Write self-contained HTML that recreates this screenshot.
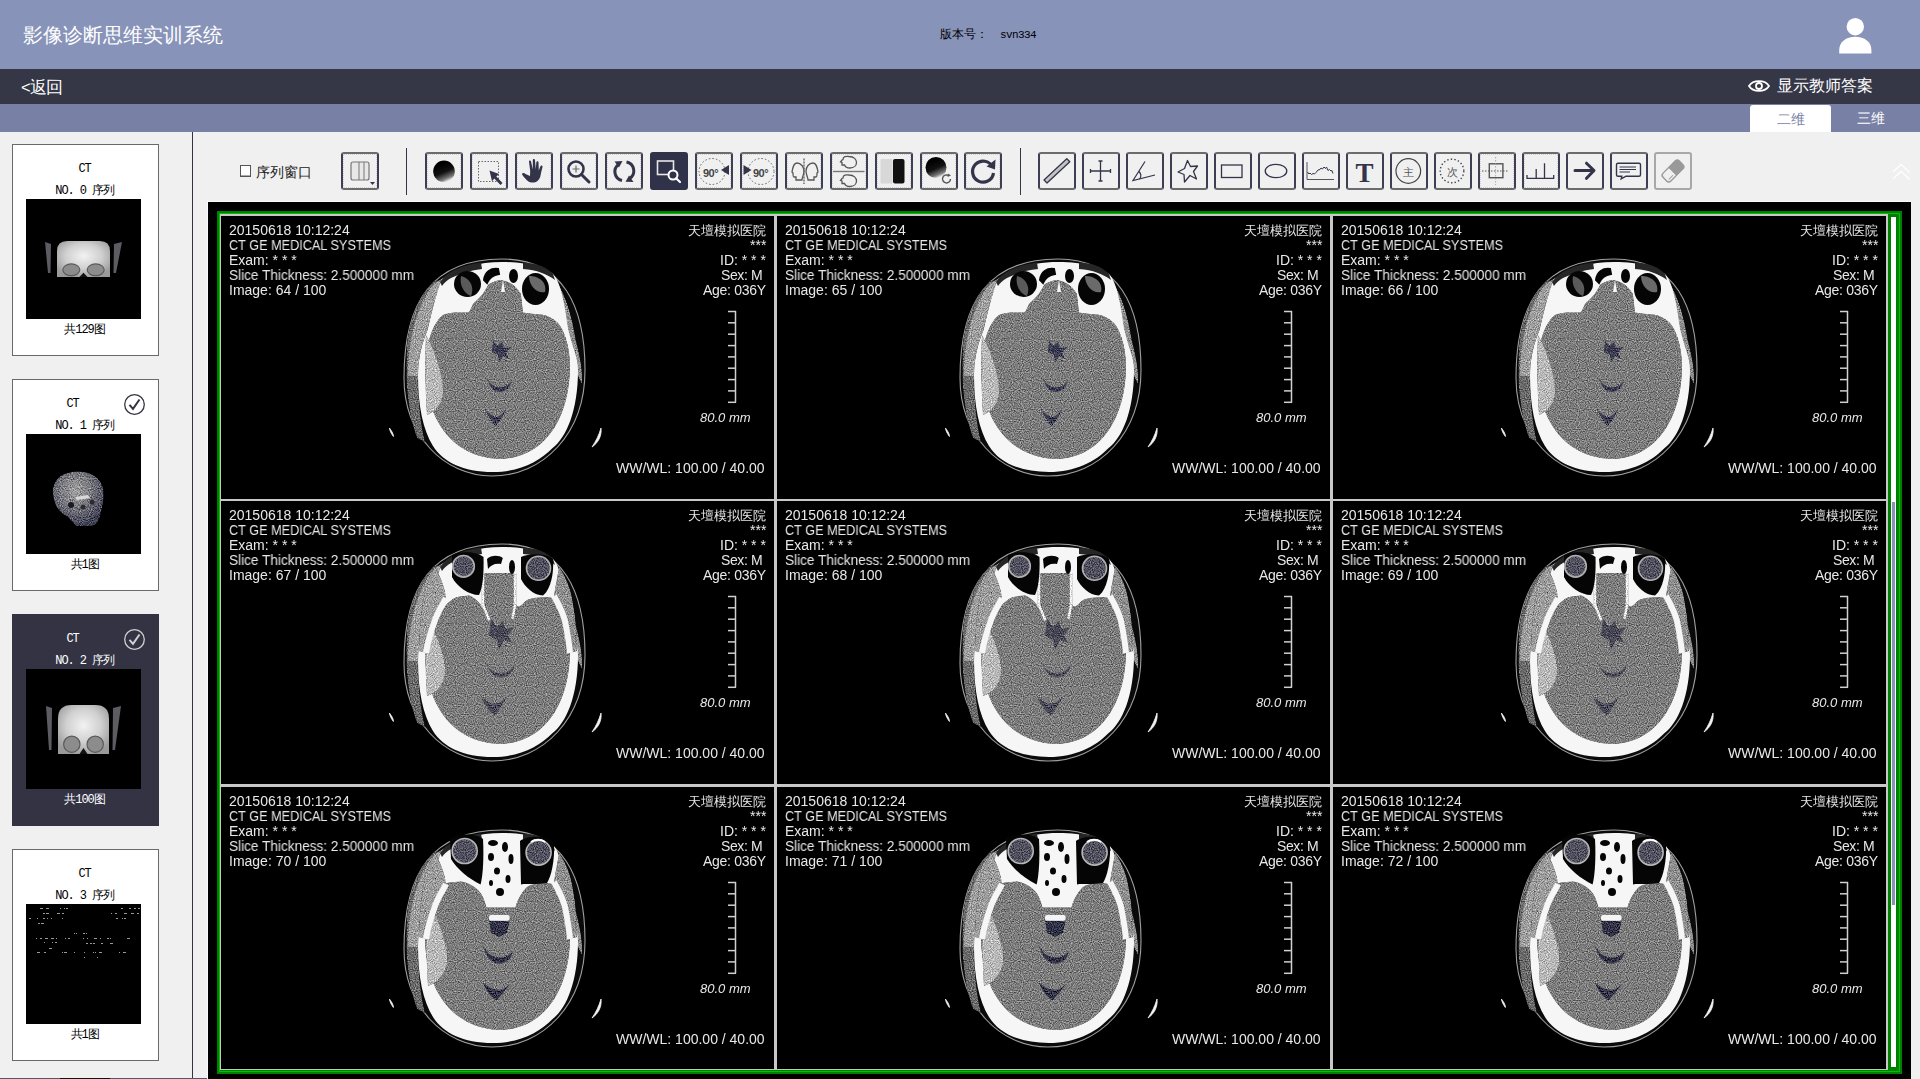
<!DOCTYPE html>
<html><head><meta charset="utf-8"><title>影像诊断思维实训系统</title>
<style>
*{box-sizing:border-box;margin:0;padding:0}
html,body{width:1920px;height:1079px;overflow:hidden;background:#f0f0f0;font-family:"Liberation Sans",sans-serif;position:relative}
.a{position:absolute}
.hdr{left:0;top:0;width:1920px;height:69px;background:#8893b9}
.bar{left:0;top:69px;width:1920px;height:35px;background:#353646}
.band{left:0;top:104px;width:1920px;height:28px;background:#7880a6}
.card{position:absolute;left:12px;width:147px;height:212px;background:#fff;border:1px solid #6a6a6a;}
.card.sel{background:#333344;border-color:#333344}
.card .t{position:absolute;left:-1px;width:100%;text-align:center;font-family:"Liberation Mono",monospace;font-size:12px;line-height:14px;letter-spacing:-1.1px;color:#000;white-space:nowrap}
.card.sel .t{color:#fff}
.thumb{position:absolute;left:13px;top:54px;width:115px;height:120px;background:#000;overflow:hidden}
.btn{position:absolute;top:152px;width:38px;height:38px;border:2px solid;border-color:#6c6c6c #3e3f54 #6c6c6c #3e3f54;border-radius:3px;background:#f0f0f0}
.btn .in{position:absolute;left:0;top:0;right:0;bottom:0;border:1px dotted #d0d0d8}
.btn svg{position:absolute;left:0;top:0}
.pn{position:absolute;background:#000;overflow:hidden}
.pn .tx{position:absolute;color:#e8e8e8;font-size:14px;line-height:15px;white-space:nowrap;will-change:transform}
</style></head><body>

<div class="a hdr"></div>
<div class="a" style="left:23px;top:22px;font-size:20px;line-height:26px;color:#fff;white-space:nowrap">影像诊断思维实训系统</div>
<div class="a" style="left:940px;top:27px;font-size:12px;line-height:14px;color:#000;white-space:nowrap">版本号：</div>
<div class="a" style="left:1000px;top:28px;font-family:'Liberation Mono',monospace;font-size:11px;line-height:14px;letter-spacing:-0.6px;color:#000;white-space:nowrap">svn334</div>
<svg class="a" style="left:1830px;top:10px" width="50" height="50" viewBox="0 0 50 50"><circle cx="25.3" cy="16.7" r="8.7" fill="#fff"/><path d="M9.2 43.6 V40 C9.2 32 16 26.7 25.3 26.7 C34.6 26.7 41.4 32 41.4 40 V43.6 Z" fill="#fff"/></svg>
<div class="a bar"></div>
<div class="a" style="left:21px;top:77px;font-size:16.5px;letter-spacing:-0.7px;line-height:20px;color:#fff;white-space:nowrap">&lt;返回</div>
<svg class="a" style="left:1746px;top:75px" width="26" height="22" viewBox="0 0 26 22"><path d="M3 11 C7 4.5 19 4.5 23 11 C19 17.5 7 17.5 3 11 Z" fill="none" stroke="#fff" stroke-width="1.8"/><circle cx="13" cy="11" r="3" fill="none" stroke="#fff" stroke-width="1.8"/></svg>
<div class="a" style="left:1777px;top:76px;font-size:16px;line-height:20px;color:#fff;white-space:nowrap">显示教师答案</div>
<div class="a band"></div>
<div class="a" style="left:1750px;top:105px;width:81px;height:27px;background:#fff;border-radius:3px 3px 0 0"></div>
<div class="a" style="left:1777px;top:110px;font-size:14px;line-height:18px;color:#7880a6;white-space:nowrap">二维</div>
<div class="a" style="left:1857px;top:109px;font-size:14px;line-height:18px;color:#fff;white-space:nowrap">三维</div>
<div class="a" style="left:192px;top:132px;width:1px;height:947px;background:#333344"></div>
<div class="a" style="left:0;top:1078px;width:208px;height:1px;background:#555566"></div><div class="a" style="left:60px;top:1078px;width:50px;height:1px;background:#111"></div>
<div class="card" style="top:144px">
<div class="t" style="top:17px">CT</div>
<div class="t" style="top:39px">NO. 0 序列</div>
<div class="thumb"><svg width="115" height="120" viewBox="0 0 115 120"><defs><radialGradient id="ga" cx="0.5" cy="0.42" r="0.62"><stop offset="0" stop-color="#f2f2f2"/><stop offset="0.55" stop-color="#d0d0d0"/><stop offset="1" stop-color="#9a9a9a"/></radialGradient></defs><path d="M19.0 43.0 L25.0 45.0 L24.5 74.0 L22.0 74.0 Z" fill="#5c5c62"/><path d="M96.0 43.0 L88.0 45.0 L87.5 74.0 L90.0 74.0 Z" fill="#5c5c62"/><path d="M31.0 78.0 L31.0 52.1 Q31.0 42.0 41.1 42.0 L73.9 42.0 Q84.0 42.0 84.0 52.1 L84.0 78.0 Z" fill="url(#ga)"/><ellipse cx="45.3" cy="70.8" rx="8.5" ry="5.9" fill="#8c8c8c" stroke="#5a5a5a" stroke-width="1.2"/><ellipse cx="69.7" cy="70.8" rx="8.5" ry="5.9" fill="#8c8c8c" stroke="#5a5a5a" stroke-width="1.2"/><path d="M53.5 78.0 L57.5 73.7 L61.5 78.0 Z" fill="#111"/></svg></div>
<div class="t" style="top:178px">共129图</div>
</div>
<div class="card" style="top:379px">
<div class="t" style="top:17px;left:-13px">CT</div>
<svg class="a" style="left:110px;top:13px" width="24" height="24" viewBox="0 0 24 24"><circle cx="11.5" cy="11.5" r="9.8" fill="none" stroke="#333344" stroke-width="1.3"/><path d="M6.5 11.8 L10 15.8 L16.5 6.5" fill="none" stroke="#333344" stroke-width="2"/></svg>
<div class="t" style="top:39px">NO. 1 序列</div>
<div class="thumb"><svg width="115" height="120" viewBox="0 0 115 120">
<defs><radialGradient id="glat" cx="0.45" cy="0.35" r="0.65"><stop offset="0" stop-color="#a0a0a0"/><stop offset="0.45" stop-color="#7a7a80"/><stop offset="1" stop-color="#3e4052"/></radialGradient></defs>
<g filter="url(#grain)"><path d="M28 66 C24 52 30 40 46 38 C62 36 74 42 77 54 C79 64 76 74 74 82 C72 88 70 92 64 92 L50 92 C46 88 44 84 40 82 C34 78 30 74 28 66 Z" fill="url(#glat)"/></g>
<path d="M49 63 L62 61 L64 64 L51 66 Z" fill="#d8d8d8"/>
<circle cx="45" cy="71" r="3" fill="#1a1a22"/><circle cx="57" cy="73" r="2.5" fill="#2a2a34"/><circle cx="66" cy="68" r="2.5" fill="#2a2a34"/>
</svg></div>
<div class="t" style="top:178px">共1图</div>
</div>
<div class="card sel" style="top:614px">
<div class="t" style="top:17px;left:-13px">CT</div>
<svg class="a" style="left:110px;top:13px" width="24" height="24" viewBox="0 0 24 24"><circle cx="11.5" cy="11.5" r="9.8" fill="none" stroke="#d0d0d0" stroke-width="1.3"/><path d="M6.5 11.8 L10 15.8 L16.5 6.5" fill="none" stroke="#d0d0d0" stroke-width="2"/></svg>
<div class="t" style="top:39px">NO. 2 序列</div>
<div class="thumb"><svg width="115" height="120" viewBox="0 0 115 120"><defs><radialGradient id="gb" cx="0.5" cy="0.42" r="0.62"><stop offset="0" stop-color="#f2f2f2"/><stop offset="0.55" stop-color="#d0d0d0"/><stop offset="1" stop-color="#9a9a9a"/></radialGradient></defs><path d="M20.0 37.0 L26.0 39.0 L25.5 81.0 L23.0 81.0 Z" fill="#5c5c62"/><path d="M95.0 37.0 L87.0 39.0 L86.5 81.0 L89.0 81.0 Z" fill="#5c5c62"/><path d="M32.0 85.0 L32.0 49.7 Q32.0 36.0 45.7 36.0 L69.3 36.0 Q83.0 36.0 83.0 49.7 L83.0 85.0 Z" fill="url(#gb)"/><ellipse cx="45.8" cy="75.2" rx="8.2" ry="8.1" fill="#8c8c8c" stroke="#5a5a5a" stroke-width="1.2"/><ellipse cx="69.2" cy="75.2" rx="8.2" ry="8.1" fill="#8c8c8c" stroke="#5a5a5a" stroke-width="1.2"/><path d="M53.5 85.0 L57.5 79.1 L61.5 85.0 Z" fill="#111"/></svg></div>
<div class="t" style="top:178px">共100图</div>
</div>
<div class="card" style="top:849px">
<div class="t" style="top:17px">CT</div>
<div class="t" style="top:39px">NO. 3 序列</div>
<div class="thumb"><svg width="115" height="120" viewBox="0 0 115 120"><rect x="14" y="4" width="3" height="1" fill="#999"/><rect x="20" y="4" width="3" height="1" fill="#999"/><rect x="34" y="4" width="1" height="1" fill="#999"/><rect x="38" y="4" width="1" height="1" fill="#999"/><rect x="40" y="4" width="2" height="1" fill="#999"/><rect x="17" y="9" width="2" height="1" fill="#999"/><rect x="20" y="9" width="3" height="1" fill="#999"/><rect x="31" y="9" width="3" height="1" fill="#999"/><rect x="36" y="9" width="2" height="1" fill="#999"/><rect x="3" y="14" width="2" height="1" fill="#999"/><rect x="11" y="14" width="1" height="1" fill="#999"/><rect x="17" y="14" width="2" height="1" fill="#999"/><rect x="21" y="14" width="1" height="1" fill="#999"/><rect x="25" y="14" width="1" height="1" fill="#999"/><rect x="36" y="14" width="1" height="1" fill="#999"/><rect x="12" y="19" width="2" height="1" fill="#999"/><rect x="15" y="19" width="3" height="1" fill="#999"/><rect x="95" y="4" width="2" height="1" fill="#999"/><rect x="103" y="4" width="2" height="1" fill="#999"/><rect x="108" y="4" width="2" height="1" fill="#999"/><rect x="112" y="4" width="2" height="1" fill="#999"/><rect x="85" y="9" width="1" height="1" fill="#999"/><rect x="89" y="9" width="2" height="1" fill="#999"/><rect x="98" y="9" width="3" height="1" fill="#999"/><rect x="105" y="9" width="3" height="1" fill="#999"/><rect x="111" y="9" width="2" height="1" fill="#999"/><rect x="90" y="14" width="2" height="1" fill="#999"/><rect x="96" y="14" width="1" height="1" fill="#999"/><rect x="98" y="14" width="2" height="1" fill="#999"/><rect x="48" y="29" width="1" height="1" fill="#999"/><rect x="50" y="29" width="1" height="1" fill="#999"/><rect x="57" y="29" width="2" height="1" fill="#999"/><rect x="60" y="29" width="1" height="1" fill="#999"/><rect x="10" y="34" width="1" height="1" fill="#999"/><rect x="14" y="34" width="2" height="1" fill="#999"/><rect x="19" y="34" width="3" height="1" fill="#999"/><rect x="25" y="34" width="3" height="1" fill="#999"/><rect x="30" y="34" width="1" height="1" fill="#999"/><rect x="39" y="34" width="1" height="1" fill="#999"/><rect x="42" y="34" width="2" height="1" fill="#999"/><rect x="57" y="34" width="1" height="1" fill="#999"/><rect x="61" y="34" width="1" height="1" fill="#999"/><rect x="68" y="34" width="3" height="1" fill="#999"/><rect x="74" y="34" width="1" height="1" fill="#999"/><rect x="81" y="34" width="2" height="1" fill="#999"/><rect x="84" y="34" width="1" height="1" fill="#999"/><rect x="101" y="34" width="3" height="1" fill="#999"/><rect x="18" y="38" width="1" height="1" fill="#999"/><rect x="26" y="38" width="1" height="1" fill="#999"/><rect x="29" y="38" width="2" height="1" fill="#999"/><rect x="60" y="39" width="2" height="1" fill="#999"/><rect x="64" y="39" width="2" height="1" fill="#999"/><rect x="67" y="39" width="2" height="1" fill="#999"/><rect x="75" y="39" width="2" height="1" fill="#999"/><rect x="84" y="39" width="3" height="1" fill="#999"/><rect x="23" y="44" width="3" height="1" fill="#999"/><rect x="11" y="48" width="3" height="1" fill="#999"/><rect x="18" y="48" width="2" height="1" fill="#999"/><rect x="36" y="48" width="1" height="1" fill="#999"/><rect x="38" y="48" width="3" height="1" fill="#999"/><rect x="48" y="48" width="1" height="1" fill="#999"/><rect x="58" y="48" width="1" height="1" fill="#999"/><rect x="67" y="48" width="1" height="1" fill="#999"/><rect x="69" y="48" width="1" height="1" fill="#999"/><rect x="73" y="48" width="3" height="1" fill="#999"/><rect x="93" y="48" width="1" height="1" fill="#999"/><rect x="97" y="48" width="3" height="1" fill="#999"/><rect x="58" y="53" width="1" height="1" fill="#999"/><rect x="71" y="53" width="1" height="1" fill="#999"/></svg></div>
<div class="t" style="top:178px">共1图</div>
</div>
<div class="a" style="left:240px;top:165px;width:11px;height:12px;border:1px solid #555;background:#fff;box-shadow:inset 0 -1px 0 #aaa"></div>
<div class="a" style="left:256px;top:164px;font-size:14px;line-height:16px;color:#222;white-space:nowrap">序列窗口</div>
<div class="a" style="left:406px;top:148px;width:1px;height:47px;background:#33344a"></div>
<div class="a" style="left:1020px;top:148px;width:1px;height:47px;background:#33344a"></div>
<div class="btn" style="left:341px;top:152px"><div class="in"></div><svg width="38" height="38" viewBox="2 2 38 38"><rect x="10" y="10" width="18" height="18" rx="2" fill="#e8e8e8" stroke="#777" stroke-width="1.2"/><line x1="18" y1="10" x2="18" y2="28" stroke="#777" stroke-width="1"/><line x1="23" y1="10" x2="23" y2="28" stroke="#777" stroke-width="1"/><path d="M29 30 L34 30 L31.5 33 Z" fill="#33344a"/></svg></div>
<div class="btn" style="left:425px;top:152px"><div class="in"></div><svg width="38" height="38" viewBox="2 2 38 38"><defs><linearGradient id="bg1" x1="0.3" y1="0.2" x2="0.65" y2="1"><stop offset="0" stop-color="#000"/><stop offset="0.45" stop-color="#111"/><stop offset="0.8" stop-color="#777"/><stop offset="1" stop-color="#fff"/></linearGradient></defs><circle cx="19" cy="19.3" r="10.8" fill="url(#bg1)"/></svg></div>
<div class="btn" style="left:470px;top:152px"><div class="in"></div><svg width="38" height="38" viewBox="2 2 38 38"><rect x="8.5" y="9.5" width="20" height="20" fill="none" stroke="#666" stroke-width="1" stroke-dasharray="1.5 1.5"/><path d="M19.5 18.5 L29 22 L26.3 24.5 L32.5 31 L30.5 33 L24.3 26.5 L22 29.3 Z" fill="#33344a"/></svg></div>
<div class="btn" style="left:515px;top:152px"><div class="in"></div><svg width="38" height="38" viewBox="2 2 38 38"><g transform="translate(-2,0)"><path d="M12.5 22 C11 20.5 8.5 21 9.2 22.8 C11 25.5 13.5 28 15.5 29.5 C17.5 31 22 31 24.5 29 C27 27 27.5 24 28 21 L29.5 15 C29.8 13.5 28 13 27.3 14.5 L25.8 18.5 L25.5 10.5 C25.5 8.8 23.5 8.8 23.3 10.5 L22.8 17.5 L22 8.2 C21.8 6.6 19.8 6.7 19.8 8.3 L19.8 17.5 L18 9.5 C17.7 8 15.8 8.3 16 9.8 L17.2 19 L17 24 Z" fill="#33344a"/></g></svg></div>
<div class="btn" style="left:560px;top:152px"><div class="in"></div><svg width="38" height="38" viewBox="2 2 38 38"><circle cx="16" cy="17" r="7.5" fill="none" stroke="#33344a" stroke-width="2.6"/><line x1="21.5" y1="22.5" x2="29" y2="30" stroke="#33344a" stroke-width="3" stroke-linecap="round"/><path d="M16 13.5 V20.5 M12.5 17 H19.5" stroke="#666" stroke-width="1.2"/></svg></div>
<div class="btn" style="left:605px;top:152px"><div class="in"></div><svg width="38" height="38" viewBox="2 2 38 38"><path d="M13.5 12.5 A9 9 0 0 0 17 28.5" fill="none" stroke="#33344a" stroke-width="3"/><path d="M21.5 10 A9 9 0 0 1 24.5 26.5" fill="none" stroke="#33344a" stroke-width="3"/><path d="M9.5 9.5 L17.5 9 L14 15.5 Z" fill="#33344a"/><path d="M28.5 30 L20.5 29.8 L24 23.5 Z" fill="#33344a"/></svg></div>
<div class="btn" style="left:650px;top:152px;background:#30324a;border-color:#30324a"><svg width="38" height="38" viewBox="2 2 38 38"><rect x="7.5" y="9" width="16" height="13.5" fill="none" stroke="#e8e8e8" stroke-width="1.6"/><circle cx="23" cy="23" r="4.5" fill="#30324a" stroke="#fff" stroke-width="2"/><line x1="26" y1="26.3" x2="30" y2="30" stroke="#fff" stroke-width="2.2" stroke-linecap="round"/></svg></div>
<div class="btn" style="left:695px;top:152px"><div class="in"></div><svg width="38" height="38" viewBox="2 2 38 38"><circle cx="17" cy="19.5" r="13" fill="none" stroke="#666" stroke-width="1" stroke-dasharray="1.6 2"/><text x="8" y="24.5" font-family="Liberation Sans" font-size="11" font-weight="bold" fill="#444" letter-spacing="-0.5">90°</text><path d="M34 13 L26 18 L34 23 Z" fill="#33344a"/></svg></div>
<div class="btn" style="left:740px;top:152px"><div class="in"></div><svg width="38" height="38" viewBox="2 2 38 38"><circle cx="21" cy="19.5" r="13" fill="none" stroke="#666" stroke-width="1" stroke-dasharray="1.6 2"/><text x="13" y="24.5" font-family="Liberation Sans" font-size="11" font-weight="bold" fill="#444" letter-spacing="-0.5">90°</text><path d="M3.5 13 L11.5 18 L3.5 23 Z" fill="#33344a"/></svg></div>
<div class="btn" style="left:785px;top:152px"><div class="in"></div><svg width="38" height="38" viewBox="2 2 38 38"><g transform="translate(7,11) scale(-1,1) translate(-8,0)"><path d="M3 0 C-1 0 -4 4 -4 8 C-4 12 -2 14 -2 17 L4 17 L4 14 L6 14 C7 14 7 12 7 10 L8 9 C7 3 6 0 3 0 Z" fill="none" stroke="#555" stroke-width="1.3"/></g><g transform="translate(25,11)"><path d="M3 0 C-1 0 -4 4 -4 8 C-4 12 -2 14 -2 17 L4 17 L4 14 L6 14 C7 14 7 12 7 10 L8 9 C7 3 6 0 3 0 Z" fill="none" stroke="#555" stroke-width="1.3"/></g><line x1="19" y1="6.5" x2="19" y2="32" stroke="#666" stroke-width="1.4" stroke-dasharray="2 1"/></svg></div>
<div class="btn" style="left:830px;top:152px"><div class="in"></div><svg width="38" height="38" viewBox="2 2 38 38"><g transform="translate(10,4.5) rotate(0)"><path d="M3 3 C3 0 6 -0.5 9 0 C14 0 16.5 3 16.5 6 C16.5 9 14 11.5 10 11.5 C7 11.5 5 10 4.5 8.5 L2 8.5 L2 6 L0.5 5.5 L2 3.5 Z" fill="none" stroke="#555" stroke-width="1.3"/></g><g transform="translate(10,23)"><path d="M3 3 C3 0 6 -0.5 9 0 C14 0 16.5 3 16.5 6 C16.5 9 14 11.5 10 11.5 C7 11.5 5 10 4.5 8.5 L2 8.5 L2 6 L0.5 5.5 L2 3.5 Z" fill="none" stroke="#555" stroke-width="1.3"/></g><line x1="3" y1="19.5" x2="34.5" y2="19.5" stroke="#777" stroke-width="1.4"/></svg></div>
<div class="btn" style="left:875px;top:152px"><div class="in"></div><svg width="38" height="38" viewBox="2 2 38 38"><rect x="5.5" y="7" width="12" height="24.5" fill="#d8d8d8"/><rect x="18" y="7" width="11.5" height="24.5" rx="2" fill="#111"/></svg></div>
<div class="btn" style="left:920px;top:152px"><div class="in"></div><svg width="38" height="38" viewBox="2 2 38 38"><defs><linearGradient id="bg2" x1="0.3" y1="0.2" x2="0.65" y2="1"><stop offset="0" stop-color="#000"/><stop offset="0.45" stop-color="#111"/><stop offset="0.8" stop-color="#777"/><stop offset="1" stop-color="#fff"/></linearGradient></defs><circle cx="16" cy="15.5" r="10.5" fill="url(#bg2)"/><path d="M30.5 27 A4 4 0 1 1 28.5 23.5" fill="none" stroke="#555" stroke-width="1.4"/><path d="M28 21.5 L31 23.5 L27.5 25 Z" fill="#555"/></svg></div>
<div class="btn" style="left:964px;top:152px"><div class="in"></div><svg width="38" height="38" viewBox="2 2 38 38"><path d="M28.5 15 A10.5 10.5 0 1 0 29.5 21" fill="none" stroke="#33344a" stroke-width="3.2"/><path d="M31.5 7.5 L31 17.5 L22.5 14.5 Z" fill="#33344a"/></svg></div>
<div class="btn" style="left:1038px;top:152px"><svg width="38" height="38" viewBox="2 2 38 38"><defs><linearGradient id="rg" x1="0" y1="0" x2="1" y2="1"><stop offset="0" stop-color="#fff"/><stop offset="1" stop-color="#888"/></linearGradient></defs><path d="M6 28 L28.8 6.8 L31.8 9.8 L9 31 Z" fill="url(#rg)" stroke="#33344a" stroke-width="1.3" stroke-linejoin="round"/></svg></div>
<div class="btn" style="left:1082px;top:152px"><svg width="38" height="38" viewBox="2 2 38 38"><path d="M8.5 19 H28.5 M18.5 9 V29 M8.5 17 V21 M28.5 17 V21 M16.5 9 H20.5 M16.5 29 H20.5" stroke="#33344a" stroke-width="1.3" fill="none"/></svg></div>
<div class="btn" style="left:1126px;top:152px"><svg width="38" height="38" viewBox="2 2 38 38"><path d="M19 9.5 L7 28.5 L29 23" fill="none" stroke="#33344a" stroke-width="1.2"/><path d="M13 19.5 A6 6 0 0 1 13.5 27.2" fill="none" stroke="#33344a" stroke-width="1.2"/></svg></div>
<div class="btn" style="left:1170px;top:152px"><svg width="38" height="38" viewBox="2 2 38 38"><path d="M17.5 8.5 L20.5 14.5 L27.5 14 L23.5 19.5 L26.5 27 L20 23.5 L14.5 30 L14 22.5 L8 20 L14.5 16.5 Z" fill="none" stroke="#33344a" stroke-width="1.3" stroke-linejoin="round"/></svg></div>
<div class="btn" style="left:1214px;top:152px"><svg width="38" height="38" viewBox="2 2 38 38"><rect x="7.5" y="13" width="20.5" height="12.5" fill="none" stroke="#33344a" stroke-width="1.3"/></svg></div>
<div class="btn" style="left:1258px;top:152px"><svg width="38" height="38" viewBox="2 2 38 38"><ellipse cx="18" cy="19" rx="10.8" ry="6.7" fill="none" stroke="#33344a" stroke-width="1.3"/></svg></div>
<div class="btn" style="left:1302px;top:152px"><svg width="38" height="38" viewBox="2 2 38 38"><path d="M5 10 V27.5 H32" fill="none" stroke="#555" stroke-width="1"/><path d="M5.5 20 L7 22 L8 21 L9.5 22.5 L11 21.5 L12.5 22 L14 20.5 L16 18 L18 17.5 L19 16 L20.5 17 L22 15 L23.5 16.5 L24.5 15 L26 18.5 L27.5 17.5 L29 19 L30 18.5 L31 21.5" fill="none" stroke="#33344a" stroke-width="1"/></svg></div>
<div class="btn" style="left:1346px;top:152px"><svg width="38" height="38" viewBox="2 2 38 38"><text x="18.5" y="30" text-anchor="middle" font-family="Liberation Serif" font-size="27" font-weight="bold" fill="#33344a">T</text></svg></div>
<div class="btn" style="left:1390px;top:152px"><svg width="38" height="38" viewBox="2 2 38 38"><circle cx="18.3" cy="19" r="12.3" fill="none" stroke="#444" stroke-width="1.2"/><text x="18.3" y="23.5" text-anchor="middle" font-size="11" fill="#555">主</text></svg></div>
<div class="btn" style="left:1434px;top:152px"><svg width="38" height="38" viewBox="2 2 38 38"><circle cx="18" cy="19" r="11.8" fill="none" stroke="#444" stroke-width="1.4" stroke-dasharray="1.4 2.2"/><text x="18" y="23.5" text-anchor="middle" font-size="11" fill="#555">次</text></svg></div>
<div class="btn" style="left:1478px;top:152px"><div class="in"></div><svg width="38" height="38" viewBox="2 2 38 38"><rect x="11.3" y="11.8" width="13.6" height="13.9" fill="none" stroke="#555" stroke-width="1.4"/><line x1="4" y1="19" x2="31" y2="19" stroke="#555" stroke-width="1.2" stroke-dasharray="1.5 1.5"/><line x1="17.6" y1="5" x2="17.6" y2="33" stroke="#999" stroke-width="0.8" stroke-dasharray="1.5 1.5"/></svg></div>
<div class="btn" style="left:1522px;top:152px"><div class="in"></div><svg width="38" height="38" viewBox="2 2 38 38"><path d="M5 23 V26.3 H31.7 V23 M14.2 26.3 V17 M22.5 26.3 V11.2" fill="none" stroke="#33344a" stroke-width="1.3"/></svg></div>
<div class="btn" style="left:1566px;top:152px"><svg width="38" height="38" viewBox="2 2 38 38"><path d="M9 18.5 H27.5 M20.5 11.2 L28 18.5 L20.5 26.3" fill="none" stroke="#33344a" stroke-width="3" stroke-linecap="round" stroke-linejoin="round"/></svg></div>
<div class="btn" style="left:1610px;top:152px"><svg width="38" height="38" viewBox="2 2 38 38"><path d="M8 11.2 H29 Q30.5 11.2 30.5 12.7 V22.7 Q30.5 24.2 29 24.2 H16 L11.2 26.9 L11.8 24.2 H8 Q6.5 24.2 6.5 22.7 V12.7 Q6.5 11.2 8 11.2 Z" fill="none" stroke="#33344a" stroke-width="1.4"/><path d="M9.5 15 H26 M9.5 17.5 H26 M9.5 20 H20" stroke="#33344a" stroke-width="1.2"/></svg></div>
<div class="btn" style="left:1654px;top:152px;border-color:#a8a8a8"><svg width="38" height="38" viewBox="2 2 38 38"><g transform="rotate(-45 19 19)"><rect x="7.5" y="13.5" width="23" height="11" rx="3" fill="none" stroke="#999" stroke-width="1.4"/><path d="M18 13.5 H27.5 Q30.5 13.5 30.5 16.5 V21.5 Q30.5 24.5 27.5 24.5 H18 Z" fill="#999"/><line x1="10" y1="22" x2="16" y2="22" stroke="#999" stroke-width="1"/></g></svg></div>
<svg class="a" style="left:1890px;top:160px" width="24" height="24" viewBox="0 0 24 24"><path d="M3.3 11.8 L11 4.3 L19.8 12.5 M3.3 18.8 L11 11.3 L19.8 19.5" fill="none" stroke="#ffffff" stroke-width="1.2"/></svg>
<div class="a" style="left:207px;top:201px;width:1704px;height:878px;background:#000;border-left:1px solid #fafafa;border-top:1px solid #fafafa"></div>
<div class="a" style="left:217px;top:211px;width:1685px;height:863px;background:#008000"></div>
<div class="a" style="left:219px;top:213px;width:1681px;height:859px;border:1px solid #00c000"></div>
<div class="a" style="left:1890px;top:216px;width:7px;height:852px;background:#007a00"></div>
<div class="a" style="left:1891px;top:217px;width:5px;height:850px;background:#fff"></div>
<div class="a" style="left:1892px;top:502px;width:3px;height:403px;background:#8893b9"></div>
<div class="a" style="left:220px;top:214px;width:1668px;height:856px;background:#c8c8c8"></div>
<svg width="0" height="0" style="position:absolute">
<defs>
<filter id="grain" x="0" y="0" width="100%" height="100%" color-interpolation-filters="sRGB">
<feTurbulence type="fractalNoise" baseFrequency="0.9" numOctaves="1" seed="7" result="n"/>
<feColorMatrix in="n" type="matrix" values="1 0 0 0 0  1 0 0 0 0  1 0 0 0 0  0 0 0 0 1" result="g"/>
<feComposite in="g" in2="SourceGraphic" operator="arithmetic" k1="0" k2="0.9" k3="1" k4="-0.45" result="m"/>
<feComposite in="m" in2="SourceGraphic" operator="in" result="m2"/>
<feTurbulence type="fractalNoise" baseFrequency="0.7" numOctaves="1" seed="23" result="n2"/>
<feColorMatrix in="n2" type="matrix" values="0 0 0 0 0.17  0 0 0 0 0.17  0 0 0 0 0.27  0 10 0 0 -7.3" result="sp"/>
<feComposite in="sp" in2="SourceGraphic" operator="in" result="sp2"/>
<feMerge><feMergeNode in="m2"/><feMergeNode in="sp2"/></feMerge>
</filter>
</defs></svg>
<div class="pn" style="left:221px;top:216px;width:553px;height:283px">
<svg class="a" style="left:0;top:0" width="553" height="283" viewBox="0 0 553 283"><path d="M281 43 C342 43 364 90 364 154 C364 218 322 260 271 260 C222 260 183 218 183 162 C183 85 212 43 281 43 Z" fill="#0a0a0a" stroke="#a0a0a0" stroke-width="1.1"/><g filter="url(#grain)"><path d="M186 130 C184 160 186 195 196 222 L204 226 C198 200 196 170 198 140 C200 110 210 85 222 66 L214 64 C198 80 188 105 186 130 Z" fill="#6a6a6a"/><path d="M222 62 C214 80 210 100 206.5 114 C202 125 197 140 197 160 L187 160 C187 130 193 100 206 78 C210 70 215 66 222 62 Z" fill="#9e9e9e"/><path d="M331 60 C344 74 351 100 355 125 C359 140 362 155 361 168 L356 158 C356 140 350 128 346 112 C343 92 339 72 331 62 Z" fill="#8e8e8e"/></g><path d="M281 46 C308 46 324 52 332 58 C340 66 344 90 347 112 C350 128 357 140 357 154 C357 195 345 222 331.6 232 C318 246 298 256 272 256 C242 256 222 246 212 230 C202 214 197 190 197 160 C197 140 202 125 206.5 114 C210 100 214 80 221 63 C236 52 258 46 281 46 Z" fill="#f6f6f6"/><path d="M219 66 C226 56 240 49 260 46.5 L261 53 C250 54 240 57 230 62 C226 64 223 67 221 70 Z" fill="#262626"/><path d="M302 46.5 C318 47 326 52 332 58 L334 64 C326 58 316 54 302 53 Z" fill="#262626"/><g filter="url(#grain)"><path d="M204 150 C204 195 225 240 277.5 243 C325 243 349 200 349 150 C349 130 343 114 337 107 C330 101 324 98.6 318.6 98.6 C312 98 306 97 302 96.5 C301 88 300.5 82 299.8 77.75 C296 72 294 70 291.5 68.4 C286 65 282 64 278 64 C272 66 269 67 267.5 68.4 C264 74 262 78 260 80 C256 84 254 86 252 88 C250 92 249 96 246.7 96.5 C240 96.5 236 96.5 233 96.5 C228 97 225 98 222.75 98.6 C212 106 206 125 204 150 Z" fill="#7c7c7c"/><path d="M205 119 C214 135 222 160 222 175 C222 185 216 195 206 199 C204 170 204 140 205 119 Z" fill="#b8b8b8"/><g fill="#30304a" opacity="0.85"><path d="M272 124 l4 6 l5 -4 l2 6 l7 -1 l-5 6 l3 6 l-6 -3 l-4 6 l-1 -7 l-6 -3 Z"/><path d="M266 162 C270 172 284 176 291 164 L289 170 C282 180 270 178 266 162 Z"/><path d="M264 193 C268 202 272 208 275 210 C279 205 283 198 286 192 C281 198 278 201 275 201 C271 200 267 197 264 193 Z"/></g></g><ellipse cx="246.5" cy="68" rx="13.5" ry="13" fill="#050505"/><path d="M240 60 C248 62 254 70 250 80 C244 78 238 70 240 60 Z" fill="#5a5a5a"/><ellipse cx="314.5" cy="73" rx="13.5" ry="16" fill="#050505"/><path d="M308 60 C318 60 326 66 324 76 C316 78 308 70 308 60 Z" fill="#6a6a6a"/><path d="M263 64 C264 56 270 52 277 53 L278 58 C272 59 268 62 266 67 Z" fill="#050505" stroke="#050505" stroke-width="2"/><ellipse cx="292.5" cy="60" rx="4.5" ry="7" fill="#050505"/><path d="M282 64 L280 76 L284 76 Z" fill="#f6f6f6"/><path d="M168.4 212 C170 214 172.8 218 172.4 220.5 C170.5 218 168.8 215 168.4 212 Z" fill="#f0f0f0" stroke="#f0f0f0" stroke-width="0.8"/><path d="M380 212 C381 220 377 227 371 231 C375 225 378 219 380 212 Z" fill="#f4f4f4" stroke="#f4f4f4" stroke-width="0.8"/>
<g stroke="#d0d0d0" stroke-width="1.5" fill="none"><line x1="514.5" y1="95" x2="514.5" y2="186.5"/><line x1="507" y1="95.5" x2="515" y2="95.5"/><line x1="507" y1="106.8" x2="515" y2="106.8"/><line x1="507" y1="118.2" x2="515" y2="118.2"/><line x1="507" y1="129.6" x2="515" y2="129.6"/><line x1="507" y1="140.9" x2="515" y2="140.9"/><line x1="507" y1="152.2" x2="515" y2="152.2"/><line x1="507" y1="163.6" x2="515" y2="163.6"/><line x1="507" y1="174.9" x2="515" y2="174.9"/><line x1="507" y1="186.3" x2="515" y2="186.3"/></g>
</svg>
<div class="tx" style="left:8px;top:7px;">20150618 10:12:24</div>
<div class="tx" style="left:8px;top:22px;transform:scaleX(0.906);transform-origin:0 0">CT GE MEDICAL SYSTEMS</div>
<div class="tx" style="left:8px;top:37px;">Exam: * * *</div>
<div class="tx" style="left:8px;top:52px;transform:scaleX(0.972);transform-origin:0 0">Slice Thickness: 2.500000 mm</div>
<div class="tx" style="left:8px;top:67px;">Image: 64 / 100</div>
<div class="tx" style="right:8px;top:7px;font-size:13px">天壇模拟医院</div>
<div class="tx" style="right:8px;top:22px;">***</div>
<div class="tx" style="right:8px;top:37px;">ID: * * *</div>
<div class="tx" style="right:8px;top:52px;letter-spacing:-0.4px">Sex: M&nbsp;</div>
<div class="tx" style="right:8px;top:67px;letter-spacing:-0.3px">Age: 036Y</div>
<div class="tx" style="left:479px;top:194px;font-size:13px;font-style:italic;color:#e8e8e8">80.0 mm</div>
<div class="tx" style="right:9px;top:245px">WW/WL: 100.00 / 40.00</div>
</div>
<div class="pn" style="left:777px;top:216px;width:553px;height:283px">
<svg class="a" style="left:0;top:0" width="553" height="283" viewBox="0 0 553 283"><path d="M281 43 C342 43 364 90 364 154 C364 218 322 260 271 260 C222 260 183 218 183 162 C183 85 212 43 281 43 Z" fill="#0a0a0a" stroke="#a0a0a0" stroke-width="1.1"/><g filter="url(#grain)"><path d="M186 130 C184 160 186 195 196 222 L204 226 C198 200 196 170 198 140 C200 110 210 85 222 66 L214 64 C198 80 188 105 186 130 Z" fill="#6a6a6a"/><path d="M222 62 C214 80 210 100 206.5 114 C202 125 197 140 197 160 L187 160 C187 130 193 100 206 78 C210 70 215 66 222 62 Z" fill="#9e9e9e"/><path d="M331 60 C344 74 351 100 355 125 C359 140 362 155 361 168 L356 158 C356 140 350 128 346 112 C343 92 339 72 331 62 Z" fill="#8e8e8e"/></g><path d="M281 46 C308 46 324 52 332 58 C340 66 344 90 347 112 C350 128 357 140 357 154 C357 195 345 222 331.6 232 C318 246 298 256 272 256 C242 256 222 246 212 230 C202 214 197 190 197 160 C197 140 202 125 206.5 114 C210 100 214 80 221 63 C236 52 258 46 281 46 Z" fill="#f6f6f6"/><path d="M219 66 C226 56 240 49 260 46.5 L261 53 C250 54 240 57 230 62 C226 64 223 67 221 70 Z" fill="#262626"/><path d="M302 46.5 C318 47 326 52 332 58 L334 64 C326 58 316 54 302 53 Z" fill="#262626"/><g filter="url(#grain)"><path d="M204 150 C204 195 225 240 277.5 243 C325 243 349 200 349 150 C349 130 343 114 337 107 C330 101 324 98.6 318.6 98.6 C312 98 306 97 302 96.5 C301 88 300.5 82 299.8 77.75 C296 72 294 70 291.5 68.4 C286 65 282 64 278 64 C272 66 269 67 267.5 68.4 C264 74 262 78 260 80 C256 84 254 86 252 88 C250 92 249 96 246.7 96.5 C240 96.5 236 96.5 233 96.5 C228 97 225 98 222.75 98.6 C212 106 206 125 204 150 Z" fill="#7c7c7c"/><path d="M205 119 C214 135 222 160 222 175 C222 185 216 195 206 199 C204 170 204 140 205 119 Z" fill="#b8b8b8"/><g fill="#30304a" opacity="0.85"><path d="M272 124 l4 6 l5 -4 l2 6 l7 -1 l-5 6 l3 6 l-6 -3 l-4 6 l-1 -7 l-6 -3 Z"/><path d="M266 162 C270 172 284 176 291 164 L289 170 C282 180 270 178 266 162 Z"/><path d="M264 193 C268 202 272 208 275 210 C279 205 283 198 286 192 C281 198 278 201 275 201 C271 200 267 197 264 193 Z"/></g></g><ellipse cx="246.5" cy="68" rx="13.5" ry="13" fill="#050505"/><path d="M240 60 C248 62 254 70 250 80 C244 78 238 70 240 60 Z" fill="#5a5a5a"/><ellipse cx="314.5" cy="73" rx="13.5" ry="16" fill="#050505"/><path d="M308 60 C318 60 326 66 324 76 C316 78 308 70 308 60 Z" fill="#6a6a6a"/><path d="M263 64 C264 56 270 52 277 53 L278 58 C272 59 268 62 266 67 Z" fill="#050505" stroke="#050505" stroke-width="2"/><ellipse cx="292.5" cy="60" rx="4.5" ry="7" fill="#050505"/><path d="M282 64 L280 76 L284 76 Z" fill="#f6f6f6"/><path d="M168.4 212 C170 214 172.8 218 172.4 220.5 C170.5 218 168.8 215 168.4 212 Z" fill="#f0f0f0" stroke="#f0f0f0" stroke-width="0.8"/><path d="M380 212 C381 220 377 227 371 231 C375 225 378 219 380 212 Z" fill="#f4f4f4" stroke="#f4f4f4" stroke-width="0.8"/>
<g stroke="#d0d0d0" stroke-width="1.5" fill="none"><line x1="514.5" y1="95" x2="514.5" y2="186.5"/><line x1="507" y1="95.5" x2="515" y2="95.5"/><line x1="507" y1="106.8" x2="515" y2="106.8"/><line x1="507" y1="118.2" x2="515" y2="118.2"/><line x1="507" y1="129.6" x2="515" y2="129.6"/><line x1="507" y1="140.9" x2="515" y2="140.9"/><line x1="507" y1="152.2" x2="515" y2="152.2"/><line x1="507" y1="163.6" x2="515" y2="163.6"/><line x1="507" y1="174.9" x2="515" y2="174.9"/><line x1="507" y1="186.3" x2="515" y2="186.3"/></g>
</svg>
<div class="tx" style="left:8px;top:7px;">20150618 10:12:24</div>
<div class="tx" style="left:8px;top:22px;transform:scaleX(0.906);transform-origin:0 0">CT GE MEDICAL SYSTEMS</div>
<div class="tx" style="left:8px;top:37px;">Exam: * * *</div>
<div class="tx" style="left:8px;top:52px;transform:scaleX(0.972);transform-origin:0 0">Slice Thickness: 2.500000 mm</div>
<div class="tx" style="left:8px;top:67px;">Image: 65 / 100</div>
<div class="tx" style="right:8px;top:7px;font-size:13px">天壇模拟医院</div>
<div class="tx" style="right:8px;top:22px;">***</div>
<div class="tx" style="right:8px;top:37px;">ID: * * *</div>
<div class="tx" style="right:8px;top:52px;letter-spacing:-0.4px">Sex: M&nbsp;</div>
<div class="tx" style="right:8px;top:67px;letter-spacing:-0.3px">Age: 036Y</div>
<div class="tx" style="left:479px;top:194px;font-size:13px;font-style:italic;color:#e8e8e8">80.0 mm</div>
<div class="tx" style="right:9px;top:245px">WW/WL: 100.00 / 40.00</div>
</div>
<div class="pn" style="left:1333px;top:216px;width:553px;height:283px">
<svg class="a" style="left:0;top:0" width="553" height="283" viewBox="0 0 553 283"><path d="M281 43 C342 43 364 90 364 154 C364 218 322 260 271 260 C222 260 183 218 183 162 C183 85 212 43 281 43 Z" fill="#0a0a0a" stroke="#a0a0a0" stroke-width="1.1"/><g filter="url(#grain)"><path d="M186 130 C184 160 186 195 196 222 L204 226 C198 200 196 170 198 140 C200 110 210 85 222 66 L214 64 C198 80 188 105 186 130 Z" fill="#6a6a6a"/><path d="M222 62 C214 80 210 100 206.5 114 C202 125 197 140 197 160 L187 160 C187 130 193 100 206 78 C210 70 215 66 222 62 Z" fill="#9e9e9e"/><path d="M331 60 C344 74 351 100 355 125 C359 140 362 155 361 168 L356 158 C356 140 350 128 346 112 C343 92 339 72 331 62 Z" fill="#8e8e8e"/></g><path d="M281 46 C308 46 324 52 332 58 C340 66 344 90 347 112 C350 128 357 140 357 154 C357 195 345 222 331.6 232 C318 246 298 256 272 256 C242 256 222 246 212 230 C202 214 197 190 197 160 C197 140 202 125 206.5 114 C210 100 214 80 221 63 C236 52 258 46 281 46 Z" fill="#f6f6f6"/><path d="M219 66 C226 56 240 49 260 46.5 L261 53 C250 54 240 57 230 62 C226 64 223 67 221 70 Z" fill="#262626"/><path d="M302 46.5 C318 47 326 52 332 58 L334 64 C326 58 316 54 302 53 Z" fill="#262626"/><g filter="url(#grain)"><path d="M204 150 C204 195 225 240 277.5 243 C325 243 349 200 349 150 C349 130 343 114 337 107 C330 101 324 98.6 318.6 98.6 C312 98 306 97 302 96.5 C301 88 300.5 82 299.8 77.75 C296 72 294 70 291.5 68.4 C286 65 282 64 278 64 C272 66 269 67 267.5 68.4 C264 74 262 78 260 80 C256 84 254 86 252 88 C250 92 249 96 246.7 96.5 C240 96.5 236 96.5 233 96.5 C228 97 225 98 222.75 98.6 C212 106 206 125 204 150 Z" fill="#7c7c7c"/><path d="M205 119 C214 135 222 160 222 175 C222 185 216 195 206 199 C204 170 204 140 205 119 Z" fill="#b8b8b8"/><g fill="#30304a" opacity="0.85"><path d="M272 124 l4 6 l5 -4 l2 6 l7 -1 l-5 6 l3 6 l-6 -3 l-4 6 l-1 -7 l-6 -3 Z"/><path d="M266 162 C270 172 284 176 291 164 L289 170 C282 180 270 178 266 162 Z"/><path d="M264 193 C268 202 272 208 275 210 C279 205 283 198 286 192 C281 198 278 201 275 201 C271 200 267 197 264 193 Z"/></g></g><ellipse cx="246.5" cy="68" rx="13.5" ry="13" fill="#050505"/><path d="M240 60 C248 62 254 70 250 80 C244 78 238 70 240 60 Z" fill="#5a5a5a"/><ellipse cx="314.5" cy="73" rx="13.5" ry="16" fill="#050505"/><path d="M308 60 C318 60 326 66 324 76 C316 78 308 70 308 60 Z" fill="#6a6a6a"/><path d="M263 64 C264 56 270 52 277 53 L278 58 C272 59 268 62 266 67 Z" fill="#050505" stroke="#050505" stroke-width="2"/><ellipse cx="292.5" cy="60" rx="4.5" ry="7" fill="#050505"/><path d="M282 64 L280 76 L284 76 Z" fill="#f6f6f6"/><path d="M168.4 212 C170 214 172.8 218 172.4 220.5 C170.5 218 168.8 215 168.4 212 Z" fill="#f0f0f0" stroke="#f0f0f0" stroke-width="0.8"/><path d="M380 212 C381 220 377 227 371 231 C375 225 378 219 380 212 Z" fill="#f4f4f4" stroke="#f4f4f4" stroke-width="0.8"/>
<g stroke="#d0d0d0" stroke-width="1.5" fill="none"><line x1="514.5" y1="95" x2="514.5" y2="186.5"/><line x1="507" y1="95.5" x2="515" y2="95.5"/><line x1="507" y1="106.8" x2="515" y2="106.8"/><line x1="507" y1="118.2" x2="515" y2="118.2"/><line x1="507" y1="129.6" x2="515" y2="129.6"/><line x1="507" y1="140.9" x2="515" y2="140.9"/><line x1="507" y1="152.2" x2="515" y2="152.2"/><line x1="507" y1="163.6" x2="515" y2="163.6"/><line x1="507" y1="174.9" x2="515" y2="174.9"/><line x1="507" y1="186.3" x2="515" y2="186.3"/></g>
</svg>
<div class="tx" style="left:8px;top:7px;">20150618 10:12:24</div>
<div class="tx" style="left:8px;top:22px;transform:scaleX(0.906);transform-origin:0 0">CT GE MEDICAL SYSTEMS</div>
<div class="tx" style="left:8px;top:37px;">Exam: * * *</div>
<div class="tx" style="left:8px;top:52px;transform:scaleX(0.972);transform-origin:0 0">Slice Thickness: 2.500000 mm</div>
<div class="tx" style="left:8px;top:67px;">Image: 66 / 100</div>
<div class="tx" style="right:8px;top:7px;font-size:13px">天壇模拟医院</div>
<div class="tx" style="right:8px;top:22px;">***</div>
<div class="tx" style="right:8px;top:37px;">ID: * * *</div>
<div class="tx" style="right:8px;top:52px;letter-spacing:-0.4px">Sex: M&nbsp;</div>
<div class="tx" style="right:8px;top:67px;letter-spacing:-0.3px">Age: 036Y</div>
<div class="tx" style="left:479px;top:194px;font-size:13px;font-style:italic;color:#e8e8e8">80.0 mm</div>
<div class="tx" style="right:9px;top:245px">WW/WL: 100.00 / 40.00</div>
</div>
<div class="pn" style="left:221px;top:501px;width:553px;height:283px">
<svg class="a" style="left:0;top:0" width="553" height="283" viewBox="0 0 553 283"><path d="M281 43 C342 43 364 90 364 154 C364 218 322 260 271 260 C222 260 183 218 183 162 C183 85 212 43 281 43 Z" fill="#0a0a0a" stroke="#a0a0a0" stroke-width="1.1"/><g filter="url(#grain)"><path d="M186 130 C184 160 186 195 196 222 L204 226 C198 200 196 170 198 140 C200 110 210 85 222 66 L214 64 C198 80 188 105 186 130 Z" fill="#6a6a6a"/><path d="M222 62 C214 80 210 100 206.5 114 C202 125 197 140 197 160 L187 160 C187 130 193 100 206 78 C210 70 215 66 222 62 Z" fill="#9e9e9e"/><path d="M331 60 C344 74 351 100 355 125 C359 140 362 155 361 168 L356 158 C356 140 350 128 346 112 C343 92 339 72 331 62 Z" fill="#8e8e8e"/></g><path d="M281 46 C308 46 324 52 332 58 C340 66 344 90 347 112 C350 128 357 140 357 154 C357 195 345 222 331.6 232 C318 246 298 256 272 256 C242 256 222 246 212 230 C202 214 197 190 197 160 C197 140 202 125 206.5 114 C210 100 214 80 221 63 C236 52 258 46 281 46 Z" fill="#f6f6f6"/><path d="M219 66 C226 56 240 49 260 46.5 L261 53 C250 54 240 57 230 62 C226 64 223 67 221 70 Z" fill="#262626"/><path d="M302 46.5 C318 47 326 52 332 58 L334 64 C326 58 316 54 302 53 Z" fill="#262626"/><g filter="url(#grain)"><path d="M204 150 C204 195 225 240 277.5 243 C325 243 349 200 349 150 C349 134 345 120 343 109 C340 100 332 96 326 96 C318 96 310 97 306 98.9 C300 104 296 110 294 100 L294 72 L262 72 L262 100 C262 108 262 110 259.6 103.3 C254 97 250 95 248 94.6 C240 95 234 96 230.7 98.9 C222 104 208 125 204 150 Z" fill="#7c7c7c"/><path d="M205 112 C214 130 224 155 224 170 C224 182 216 192 206 195 C204 165 204 135 205 112 Z" fill="#b8b8b8"/><g fill="#26263e" opacity="0.6"><path d="M270 118 l6 8 l6 -6 l3 8 l8 -2 l-6 8 l4 8 l-8 -3 l-5 10 l-2 -10 l-8 -4 Z"/><path d="M265 161 C270 175 286 177 294 163 L292 169 C284 181 270 179 265 161 Z"/><path d="M260 196 C265 207 271 213 274 214 C279 208 283 201 286 196 C281 200 278 203 273 203 C268 202 264 199 260 196 Z"/></g><path d="M262 72 L262 104 L268.3 119.2 M294 72 L294 104 L291.5 117.7" fill="none" stroke="#f0f0f0" stroke-width="2.5"/></g><path d="M231 54 C238 50 256 50 262.5 56 C263 70 262 86 258 94 C248 94 236 86 231 76 Z" fill="#050505"/><path d="M300 56 C308 52 326 52 332 58 C333 72 330 88 322 94.6 C312 94 304 86 300 78 Z" fill="#050505"/><g filter="url(#grain)"><circle cx="242.5" cy="65.3" r="10.8" fill="#50505e"/><circle cx="317.5" cy="67.3" r="12" fill="#50505e"/></g><circle cx="242.5" cy="65.3" r="10.8" fill="none" stroke="#b0b0b0" stroke-width="1.6"/><circle cx="317.5" cy="67.3" r="12" fill="none" stroke="#b0b0b0" stroke-width="1.6"/><path d="M266 58 C270 54 278 54 281.8 57 L280 63 C274 62 270 64 267 68 Z" fill="#050505"/><ellipse cx="291" cy="66" rx="3" ry="7" fill="#050505"/><g filter="url(#grain)"><path d="M214 66 C220 76 224 88 225 97 C222 104 217 110 213.7 120 C210 130 207 140 205 152 L198 150 C198 130 200 110 204 92 C206 82 210 72 214 66 Z" fill="#9c9c9c"/><path d="M338 66 C336 78 334 88 333 95 C338 104 342 112 344 120 C346 130 348 140 349 152 L356 150 C356 130 354 110 350 92 C347 82 343 72 338 66 Z" fill="#8e8e8e"/></g><path d="M225 97 C222 104 217 110 213.7 120 C210 130 207 140 205 152" fill="none" stroke="#f6f6f6" stroke-width="6"/><path d="M333 95 C338 104 342 112 344 120 C346 130 348 140 349 152" fill="none" stroke="#f6f6f6" stroke-width="6"/><path d="M168.4 212 C170 214 172.8 218 172.4 220.5 C170.5 218 168.8 215 168.4 212 Z" fill="#f0f0f0" stroke="#f0f0f0" stroke-width="0.8"/><path d="M380 212 C381 220 377 227 371 231 C375 225 378 219 380 212 Z" fill="#f4f4f4" stroke="#f4f4f4" stroke-width="0.8"/>
<g stroke="#d0d0d0" stroke-width="1.5" fill="none"><line x1="514.5" y1="95" x2="514.5" y2="186.5"/><line x1="507" y1="95.5" x2="515" y2="95.5"/><line x1="507" y1="106.8" x2="515" y2="106.8"/><line x1="507" y1="118.2" x2="515" y2="118.2"/><line x1="507" y1="129.6" x2="515" y2="129.6"/><line x1="507" y1="140.9" x2="515" y2="140.9"/><line x1="507" y1="152.2" x2="515" y2="152.2"/><line x1="507" y1="163.6" x2="515" y2="163.6"/><line x1="507" y1="174.9" x2="515" y2="174.9"/><line x1="507" y1="186.3" x2="515" y2="186.3"/></g>
</svg>
<div class="tx" style="left:8px;top:7px;">20150618 10:12:24</div>
<div class="tx" style="left:8px;top:22px;transform:scaleX(0.906);transform-origin:0 0">CT GE MEDICAL SYSTEMS</div>
<div class="tx" style="left:8px;top:37px;">Exam: * * *</div>
<div class="tx" style="left:8px;top:52px;transform:scaleX(0.972);transform-origin:0 0">Slice Thickness: 2.500000 mm</div>
<div class="tx" style="left:8px;top:67px;">Image: 67 / 100</div>
<div class="tx" style="right:8px;top:7px;font-size:13px">天壇模拟医院</div>
<div class="tx" style="right:8px;top:22px;">***</div>
<div class="tx" style="right:8px;top:37px;">ID: * * *</div>
<div class="tx" style="right:8px;top:52px;letter-spacing:-0.4px">Sex: M&nbsp;</div>
<div class="tx" style="right:8px;top:67px;letter-spacing:-0.3px">Age: 036Y</div>
<div class="tx" style="left:479px;top:194px;font-size:13px;font-style:italic;color:#e8e8e8">80.0 mm</div>
<div class="tx" style="right:9px;top:245px">WW/WL: 100.00 / 40.00</div>
</div>
<div class="pn" style="left:777px;top:501px;width:553px;height:283px">
<svg class="a" style="left:0;top:0" width="553" height="283" viewBox="0 0 553 283"><path d="M281 43 C342 43 364 90 364 154 C364 218 322 260 271 260 C222 260 183 218 183 162 C183 85 212 43 281 43 Z" fill="#0a0a0a" stroke="#a0a0a0" stroke-width="1.1"/><g filter="url(#grain)"><path d="M186 130 C184 160 186 195 196 222 L204 226 C198 200 196 170 198 140 C200 110 210 85 222 66 L214 64 C198 80 188 105 186 130 Z" fill="#6a6a6a"/><path d="M222 62 C214 80 210 100 206.5 114 C202 125 197 140 197 160 L187 160 C187 130 193 100 206 78 C210 70 215 66 222 62 Z" fill="#9e9e9e"/><path d="M331 60 C344 74 351 100 355 125 C359 140 362 155 361 168 L356 158 C356 140 350 128 346 112 C343 92 339 72 331 62 Z" fill="#8e8e8e"/></g><path d="M281 46 C308 46 324 52 332 58 C340 66 344 90 347 112 C350 128 357 140 357 154 C357 195 345 222 331.6 232 C318 246 298 256 272 256 C242 256 222 246 212 230 C202 214 197 190 197 160 C197 140 202 125 206.5 114 C210 100 214 80 221 63 C236 52 258 46 281 46 Z" fill="#f6f6f6"/><path d="M219 66 C226 56 240 49 260 46.5 L261 53 C250 54 240 57 230 62 C226 64 223 67 221 70 Z" fill="#262626"/><path d="M302 46.5 C318 47 326 52 332 58 L334 64 C326 58 316 54 302 53 Z" fill="#262626"/><g filter="url(#grain)"><path d="M204 150 C204 195 225 240 277.5 243 C325 243 349 200 349 150 C349 134 345 120 343 109 C340 100 332 96 326 96 C318 96 310 97 306 98.9 C300 104 296 110 294 100 L294 72 L262 72 L262 100 C262 108 262 110 259.6 103.3 C254 97 250 95 248 94.6 C240 95 234 96 230.7 98.9 C222 104 208 125 204 150 Z" fill="#7c7c7c"/><path d="M205 112 C214 130 224 155 224 170 C224 182 216 192 206 195 C204 165 204 135 205 112 Z" fill="#b8b8b8"/><g fill="#26263e" opacity="0.6"><path d="M270 118 l6 8 l6 -6 l3 8 l8 -2 l-6 8 l4 8 l-8 -3 l-5 10 l-2 -10 l-8 -4 Z"/><path d="M265 161 C270 175 286 177 294 163 L292 169 C284 181 270 179 265 161 Z"/><path d="M260 196 C265 207 271 213 274 214 C279 208 283 201 286 196 C281 200 278 203 273 203 C268 202 264 199 260 196 Z"/></g><path d="M262 72 L262 104 L268.3 119.2 M294 72 L294 104 L291.5 117.7" fill="none" stroke="#f0f0f0" stroke-width="2.5"/></g><path d="M231 54 C238 50 256 50 262.5 56 C263 70 262 86 258 94 C248 94 236 86 231 76 Z" fill="#050505"/><path d="M300 56 C308 52 326 52 332 58 C333 72 330 88 322 94.6 C312 94 304 86 300 78 Z" fill="#050505"/><g filter="url(#grain)"><circle cx="242.5" cy="65.3" r="10.8" fill="#50505e"/><circle cx="317.5" cy="67.3" r="12" fill="#50505e"/></g><circle cx="242.5" cy="65.3" r="10.8" fill="none" stroke="#b0b0b0" stroke-width="1.6"/><circle cx="317.5" cy="67.3" r="12" fill="none" stroke="#b0b0b0" stroke-width="1.6"/><path d="M266 58 C270 54 278 54 281.8 57 L280 63 C274 62 270 64 267 68 Z" fill="#050505"/><ellipse cx="291" cy="66" rx="3" ry="7" fill="#050505"/><g filter="url(#grain)"><path d="M214 66 C220 76 224 88 225 97 C222 104 217 110 213.7 120 C210 130 207 140 205 152 L198 150 C198 130 200 110 204 92 C206 82 210 72 214 66 Z" fill="#9c9c9c"/><path d="M338 66 C336 78 334 88 333 95 C338 104 342 112 344 120 C346 130 348 140 349 152 L356 150 C356 130 354 110 350 92 C347 82 343 72 338 66 Z" fill="#8e8e8e"/></g><path d="M225 97 C222 104 217 110 213.7 120 C210 130 207 140 205 152" fill="none" stroke="#f6f6f6" stroke-width="6"/><path d="M333 95 C338 104 342 112 344 120 C346 130 348 140 349 152" fill="none" stroke="#f6f6f6" stroke-width="6"/><path d="M168.4 212 C170 214 172.8 218 172.4 220.5 C170.5 218 168.8 215 168.4 212 Z" fill="#f0f0f0" stroke="#f0f0f0" stroke-width="0.8"/><path d="M380 212 C381 220 377 227 371 231 C375 225 378 219 380 212 Z" fill="#f4f4f4" stroke="#f4f4f4" stroke-width="0.8"/>
<g stroke="#d0d0d0" stroke-width="1.5" fill="none"><line x1="514.5" y1="95" x2="514.5" y2="186.5"/><line x1="507" y1="95.5" x2="515" y2="95.5"/><line x1="507" y1="106.8" x2="515" y2="106.8"/><line x1="507" y1="118.2" x2="515" y2="118.2"/><line x1="507" y1="129.6" x2="515" y2="129.6"/><line x1="507" y1="140.9" x2="515" y2="140.9"/><line x1="507" y1="152.2" x2="515" y2="152.2"/><line x1="507" y1="163.6" x2="515" y2="163.6"/><line x1="507" y1="174.9" x2="515" y2="174.9"/><line x1="507" y1="186.3" x2="515" y2="186.3"/></g>
</svg>
<div class="tx" style="left:8px;top:7px;">20150618 10:12:24</div>
<div class="tx" style="left:8px;top:22px;transform:scaleX(0.906);transform-origin:0 0">CT GE MEDICAL SYSTEMS</div>
<div class="tx" style="left:8px;top:37px;">Exam: * * *</div>
<div class="tx" style="left:8px;top:52px;transform:scaleX(0.972);transform-origin:0 0">Slice Thickness: 2.500000 mm</div>
<div class="tx" style="left:8px;top:67px;">Image: 68 / 100</div>
<div class="tx" style="right:8px;top:7px;font-size:13px">天壇模拟医院</div>
<div class="tx" style="right:8px;top:22px;">***</div>
<div class="tx" style="right:8px;top:37px;">ID: * * *</div>
<div class="tx" style="right:8px;top:52px;letter-spacing:-0.4px">Sex: M&nbsp;</div>
<div class="tx" style="right:8px;top:67px;letter-spacing:-0.3px">Age: 036Y</div>
<div class="tx" style="left:479px;top:194px;font-size:13px;font-style:italic;color:#e8e8e8">80.0 mm</div>
<div class="tx" style="right:9px;top:245px">WW/WL: 100.00 / 40.00</div>
</div>
<div class="pn" style="left:1333px;top:501px;width:553px;height:283px">
<svg class="a" style="left:0;top:0" width="553" height="283" viewBox="0 0 553 283"><path d="M281 43 C342 43 364 90 364 154 C364 218 322 260 271 260 C222 260 183 218 183 162 C183 85 212 43 281 43 Z" fill="#0a0a0a" stroke="#a0a0a0" stroke-width="1.1"/><g filter="url(#grain)"><path d="M186 130 C184 160 186 195 196 222 L204 226 C198 200 196 170 198 140 C200 110 210 85 222 66 L214 64 C198 80 188 105 186 130 Z" fill="#6a6a6a"/><path d="M222 62 C214 80 210 100 206.5 114 C202 125 197 140 197 160 L187 160 C187 130 193 100 206 78 C210 70 215 66 222 62 Z" fill="#9e9e9e"/><path d="M331 60 C344 74 351 100 355 125 C359 140 362 155 361 168 L356 158 C356 140 350 128 346 112 C343 92 339 72 331 62 Z" fill="#8e8e8e"/></g><path d="M281 46 C308 46 324 52 332 58 C340 66 344 90 347 112 C350 128 357 140 357 154 C357 195 345 222 331.6 232 C318 246 298 256 272 256 C242 256 222 246 212 230 C202 214 197 190 197 160 C197 140 202 125 206.5 114 C210 100 214 80 221 63 C236 52 258 46 281 46 Z" fill="#f6f6f6"/><path d="M219 66 C226 56 240 49 260 46.5 L261 53 C250 54 240 57 230 62 C226 64 223 67 221 70 Z" fill="#262626"/><path d="M302 46.5 C318 47 326 52 332 58 L334 64 C326 58 316 54 302 53 Z" fill="#262626"/><g filter="url(#grain)"><path d="M204 150 C204 195 225 240 277.5 243 C325 243 349 200 349 150 C349 134 345 120 343 109 C340 100 332 96 326 96 C318 96 310 97 306 98.9 C300 104 296 110 294 100 L294 72 L262 72 L262 100 C262 108 262 110 259.6 103.3 C254 97 250 95 248 94.6 C240 95 234 96 230.7 98.9 C222 104 208 125 204 150 Z" fill="#7c7c7c"/><path d="M205 112 C214 130 224 155 224 170 C224 182 216 192 206 195 C204 165 204 135 205 112 Z" fill="#b8b8b8"/><g fill="#26263e" opacity="0.6"><path d="M270 118 l6 8 l6 -6 l3 8 l8 -2 l-6 8 l4 8 l-8 -3 l-5 10 l-2 -10 l-8 -4 Z"/><path d="M265 161 C270 175 286 177 294 163 L292 169 C284 181 270 179 265 161 Z"/><path d="M260 196 C265 207 271 213 274 214 C279 208 283 201 286 196 C281 200 278 203 273 203 C268 202 264 199 260 196 Z"/></g><path d="M262 72 L262 104 L268.3 119.2 M294 72 L294 104 L291.5 117.7" fill="none" stroke="#f0f0f0" stroke-width="2.5"/></g><path d="M231 54 C238 50 256 50 262.5 56 C263 70 262 86 258 94 C248 94 236 86 231 76 Z" fill="#050505"/><path d="M300 56 C308 52 326 52 332 58 C333 72 330 88 322 94.6 C312 94 304 86 300 78 Z" fill="#050505"/><g filter="url(#grain)"><circle cx="242.5" cy="65.3" r="10.8" fill="#50505e"/><circle cx="317.5" cy="67.3" r="12" fill="#50505e"/></g><circle cx="242.5" cy="65.3" r="10.8" fill="none" stroke="#b0b0b0" stroke-width="1.6"/><circle cx="317.5" cy="67.3" r="12" fill="none" stroke="#b0b0b0" stroke-width="1.6"/><path d="M266 58 C270 54 278 54 281.8 57 L280 63 C274 62 270 64 267 68 Z" fill="#050505"/><ellipse cx="291" cy="66" rx="3" ry="7" fill="#050505"/><g filter="url(#grain)"><path d="M214 66 C220 76 224 88 225 97 C222 104 217 110 213.7 120 C210 130 207 140 205 152 L198 150 C198 130 200 110 204 92 C206 82 210 72 214 66 Z" fill="#9c9c9c"/><path d="M338 66 C336 78 334 88 333 95 C338 104 342 112 344 120 C346 130 348 140 349 152 L356 150 C356 130 354 110 350 92 C347 82 343 72 338 66 Z" fill="#8e8e8e"/></g><path d="M225 97 C222 104 217 110 213.7 120 C210 130 207 140 205 152" fill="none" stroke="#f6f6f6" stroke-width="6"/><path d="M333 95 C338 104 342 112 344 120 C346 130 348 140 349 152" fill="none" stroke="#f6f6f6" stroke-width="6"/><path d="M168.4 212 C170 214 172.8 218 172.4 220.5 C170.5 218 168.8 215 168.4 212 Z" fill="#f0f0f0" stroke="#f0f0f0" stroke-width="0.8"/><path d="M380 212 C381 220 377 227 371 231 C375 225 378 219 380 212 Z" fill="#f4f4f4" stroke="#f4f4f4" stroke-width="0.8"/>
<g stroke="#d0d0d0" stroke-width="1.5" fill="none"><line x1="514.5" y1="95" x2="514.5" y2="186.5"/><line x1="507" y1="95.5" x2="515" y2="95.5"/><line x1="507" y1="106.8" x2="515" y2="106.8"/><line x1="507" y1="118.2" x2="515" y2="118.2"/><line x1="507" y1="129.6" x2="515" y2="129.6"/><line x1="507" y1="140.9" x2="515" y2="140.9"/><line x1="507" y1="152.2" x2="515" y2="152.2"/><line x1="507" y1="163.6" x2="515" y2="163.6"/><line x1="507" y1="174.9" x2="515" y2="174.9"/><line x1="507" y1="186.3" x2="515" y2="186.3"/></g>
</svg>
<div class="tx" style="left:8px;top:7px;">20150618 10:12:24</div>
<div class="tx" style="left:8px;top:22px;transform:scaleX(0.906);transform-origin:0 0">CT GE MEDICAL SYSTEMS</div>
<div class="tx" style="left:8px;top:37px;">Exam: * * *</div>
<div class="tx" style="left:8px;top:52px;transform:scaleX(0.972);transform-origin:0 0">Slice Thickness: 2.500000 mm</div>
<div class="tx" style="left:8px;top:67px;">Image: 69 / 100</div>
<div class="tx" style="right:8px;top:7px;font-size:13px">天壇模拟医院</div>
<div class="tx" style="right:8px;top:22px;">***</div>
<div class="tx" style="right:8px;top:37px;">ID: * * *</div>
<div class="tx" style="right:8px;top:52px;letter-spacing:-0.4px">Sex: M&nbsp;</div>
<div class="tx" style="right:8px;top:67px;letter-spacing:-0.3px">Age: 036Y</div>
<div class="tx" style="left:479px;top:194px;font-size:13px;font-style:italic;color:#e8e8e8">80.0 mm</div>
<div class="tx" style="right:9px;top:245px">WW/WL: 100.00 / 40.00</div>
</div>
<div class="pn" style="left:221px;top:787px;width:553px;height:282px">
<svg class="a" style="left:0;top:0" width="553" height="282" viewBox="0 0 553 282"><path d="M281 43 C342 43 364 90 364 154 C364 218 322 260 271 260 C222 260 183 218 183 162 C183 85 212 43 281 43 Z" fill="#0a0a0a" stroke="#a0a0a0" stroke-width="1.1"/><g filter="url(#grain)"><path d="M186 130 C184 160 186 195 196 222 L204 226 C198 200 196 170 198 140 C200 110 210 85 222 66 L214 64 C198 80 188 105 186 130 Z" fill="#6a6a6a"/><path d="M222 62 C214 80 210 100 206.5 114 C202 125 197 140 197 160 L187 160 C187 130 193 100 206 78 C210 70 215 66 222 62 Z" fill="#9e9e9e"/><path d="M331 60 C344 74 351 100 355 125 C359 140 362 155 361 168 L356 158 C356 140 350 128 346 112 C343 92 339 72 331 62 Z" fill="#8e8e8e"/></g><path d="M281 46 C308 46 324 52 332 58 C340 66 344 90 347 112 C350 128 357 140 357 154 C357 195 345 222 331.6 232 C318 246 298 256 272 256 C242 256 222 246 212 230 C202 214 197 190 197 160 C197 140 202 125 206.5 114 C210 100 214 80 221 63 C236 52 258 46 281 46 Z" fill="#f6f6f6"/><path d="M219 66 C226 56 240 49 260 46.5 L261 53 C250 54 240 57 230 62 C226 64 223 67 221 70 Z" fill="#262626"/><path d="M302 46.5 C318 47 326 52 332 58 L334 64 C326 58 316 54 302 53 Z" fill="#262626"/><g filter="url(#grain)"><path d="M204 150 C204 195 225 240 277.5 243 C325 243 349 200 349 150 C349 134 345 120 342 109 C338 100 332 96 326 96 C318 96 310 97 306 100 C300 106 296 114 294.4 120.6 L265.4 120.6 C264 114 262 110 259.6 106 C254 99 246 95 239 94.6 C232 95 224 96 219 97.5 C212 104 206 125 204 150 Z" fill="#7c7c7c"/><path d="M206 111 C216 130 226 155 226 172 C226 184 218 195 207 199 C205 168 205 138 206 111 Z" fill="#b8b8b8"/><g fill="#26263e" opacity="0.85"><path d="M268 133.7 L288.6 133.7 L286 146 L278 150 L270 146 Z"/><path d="M262 158 C266 170 282 176 292 164 L290 170 C282 182 266 178 262 158 Z"/><path d="M262 196 C266 206 272 212 276 213 C280 208 286 202 290 196 C285 201 280 204 276 203 C270 202 266 199 262 196 Z"/></g></g><rect x="268" y="128" width="20.6" height="5.7" rx="2" fill="#f4f4f4"/><path d="M229 52 C236 46 256 46 262 52 C263 70 262 88 259.6 97.5 C248 92 236 82 230 72 Z" fill="#050505"/><path d="M299 54 C306 48 328 48 333 56 C334 74 330 90 326 96 C314 98 304 96 300 97.5 Z" fill="#050505"/><g filter="url(#grain)"><circle cx="243.7" cy="64" r="12.5" fill="#50505e"/><circle cx="317.6" cy="65.6" r="12.5" fill="#50505e"/></g><circle cx="243.7" cy="64" r="12.5" fill="none" stroke="#b8b8b8" stroke-width="1.6"/><circle cx="317.6" cy="65.6" r="12.5" fill="none" stroke="#b8b8b8" stroke-width="1.6"/><path d="M310 55 C314 52 320 52 324 55" fill="none" stroke="#fff" stroke-width="2"/><g fill="#050505"><ellipse cx="272" cy="56" rx="5" ry="3"/><ellipse cx="284" cy="60" rx="3" ry="5"/><ellipse cx="270" cy="70" rx="3" ry="4"/><ellipse cx="290" cy="72" rx="2.5" ry="5"/><ellipse cx="276" cy="84" rx="3" ry="3.5"/><ellipse cx="287" cy="92" rx="2.5" ry="4"/><ellipse cx="270" cy="96" rx="2" ry="3"/><ellipse cx="279" cy="105" rx="4" ry="4"/></g><g filter="url(#grain)"><path d="M214 66 C220 76 224 88 225 97 C222 104 217 110 213.7 120 C210 130 207 140 205 152 L198 150 C198 130 200 110 204 92 C206 82 210 72 214 66 Z" fill="#9c9c9c"/><path d="M338 66 C336 78 334 88 333 95 C338 104 342 112 344 120 C346 130 348 140 349 152 L356 150 C356 130 354 110 350 92 C347 82 343 72 338 66 Z" fill="#8e8e8e"/></g><path d="M225 97 C222 104 217 110 213.7 120 C210 130 207 140 205 152" fill="none" stroke="#f6f6f6" stroke-width="6"/><path d="M333 95 C338 104 342 112 344 120 C346 130 348 140 349 152" fill="none" stroke="#f6f6f6" stroke-width="6"/><path d="M168.4 212 C170 214 172.8 218 172.4 220.5 C170.5 218 168.8 215 168.4 212 Z" fill="#f0f0f0" stroke="#f0f0f0" stroke-width="0.8"/><path d="M380 212 C381 220 377 227 371 231 C375 225 378 219 380 212 Z" fill="#f4f4f4" stroke="#f4f4f4" stroke-width="0.8"/>
<g stroke="#d0d0d0" stroke-width="1.5" fill="none"><line x1="514.5" y1="95" x2="514.5" y2="186.5"/><line x1="507" y1="95.5" x2="515" y2="95.5"/><line x1="507" y1="106.8" x2="515" y2="106.8"/><line x1="507" y1="118.2" x2="515" y2="118.2"/><line x1="507" y1="129.6" x2="515" y2="129.6"/><line x1="507" y1="140.9" x2="515" y2="140.9"/><line x1="507" y1="152.2" x2="515" y2="152.2"/><line x1="507" y1="163.6" x2="515" y2="163.6"/><line x1="507" y1="174.9" x2="515" y2="174.9"/><line x1="507" y1="186.3" x2="515" y2="186.3"/></g>
</svg>
<div class="tx" style="left:8px;top:7px;">20150618 10:12:24</div>
<div class="tx" style="left:8px;top:22px;transform:scaleX(0.906);transform-origin:0 0">CT GE MEDICAL SYSTEMS</div>
<div class="tx" style="left:8px;top:37px;">Exam: * * *</div>
<div class="tx" style="left:8px;top:52px;transform:scaleX(0.972);transform-origin:0 0">Slice Thickness: 2.500000 mm</div>
<div class="tx" style="left:8px;top:67px;">Image: 70 / 100</div>
<div class="tx" style="right:8px;top:7px;font-size:13px">天壇模拟医院</div>
<div class="tx" style="right:8px;top:22px;">***</div>
<div class="tx" style="right:8px;top:37px;">ID: * * *</div>
<div class="tx" style="right:8px;top:52px;letter-spacing:-0.4px">Sex: M&nbsp;</div>
<div class="tx" style="right:8px;top:67px;letter-spacing:-0.3px">Age: 036Y</div>
<div class="tx" style="left:479px;top:194px;font-size:13px;font-style:italic;color:#e8e8e8">80.0 mm</div>
<div class="tx" style="right:9px;top:245px">WW/WL: 100.00 / 40.00</div>
</div>
<div class="pn" style="left:777px;top:787px;width:553px;height:282px">
<svg class="a" style="left:0;top:0" width="553" height="282" viewBox="0 0 553 282"><path d="M281 43 C342 43 364 90 364 154 C364 218 322 260 271 260 C222 260 183 218 183 162 C183 85 212 43 281 43 Z" fill="#0a0a0a" stroke="#a0a0a0" stroke-width="1.1"/><g filter="url(#grain)"><path d="M186 130 C184 160 186 195 196 222 L204 226 C198 200 196 170 198 140 C200 110 210 85 222 66 L214 64 C198 80 188 105 186 130 Z" fill="#6a6a6a"/><path d="M222 62 C214 80 210 100 206.5 114 C202 125 197 140 197 160 L187 160 C187 130 193 100 206 78 C210 70 215 66 222 62 Z" fill="#9e9e9e"/><path d="M331 60 C344 74 351 100 355 125 C359 140 362 155 361 168 L356 158 C356 140 350 128 346 112 C343 92 339 72 331 62 Z" fill="#8e8e8e"/></g><path d="M281 46 C308 46 324 52 332 58 C340 66 344 90 347 112 C350 128 357 140 357 154 C357 195 345 222 331.6 232 C318 246 298 256 272 256 C242 256 222 246 212 230 C202 214 197 190 197 160 C197 140 202 125 206.5 114 C210 100 214 80 221 63 C236 52 258 46 281 46 Z" fill="#f6f6f6"/><path d="M219 66 C226 56 240 49 260 46.5 L261 53 C250 54 240 57 230 62 C226 64 223 67 221 70 Z" fill="#262626"/><path d="M302 46.5 C318 47 326 52 332 58 L334 64 C326 58 316 54 302 53 Z" fill="#262626"/><g filter="url(#grain)"><path d="M204 150 C204 195 225 240 277.5 243 C325 243 349 200 349 150 C349 134 345 120 342 109 C338 100 332 96 326 96 C318 96 310 97 306 100 C300 106 296 114 294.4 120.6 L265.4 120.6 C264 114 262 110 259.6 106 C254 99 246 95 239 94.6 C232 95 224 96 219 97.5 C212 104 206 125 204 150 Z" fill="#7c7c7c"/><path d="M206 111 C216 130 226 155 226 172 C226 184 218 195 207 199 C205 168 205 138 206 111 Z" fill="#b8b8b8"/><g fill="#26263e" opacity="0.85"><path d="M268 133.7 L288.6 133.7 L286 146 L278 150 L270 146 Z"/><path d="M262 158 C266 170 282 176 292 164 L290 170 C282 182 266 178 262 158 Z"/><path d="M262 196 C266 206 272 212 276 213 C280 208 286 202 290 196 C285 201 280 204 276 203 C270 202 266 199 262 196 Z"/></g></g><rect x="268" y="128" width="20.6" height="5.7" rx="2" fill="#f4f4f4"/><path d="M229 52 C236 46 256 46 262 52 C263 70 262 88 259.6 97.5 C248 92 236 82 230 72 Z" fill="#050505"/><path d="M299 54 C306 48 328 48 333 56 C334 74 330 90 326 96 C314 98 304 96 300 97.5 Z" fill="#050505"/><g filter="url(#grain)"><circle cx="243.7" cy="64" r="12.5" fill="#50505e"/><circle cx="317.6" cy="65.6" r="12.5" fill="#50505e"/></g><circle cx="243.7" cy="64" r="12.5" fill="none" stroke="#b8b8b8" stroke-width="1.6"/><circle cx="317.6" cy="65.6" r="12.5" fill="none" stroke="#b8b8b8" stroke-width="1.6"/><path d="M310 55 C314 52 320 52 324 55" fill="none" stroke="#fff" stroke-width="2"/><g fill="#050505"><ellipse cx="272" cy="56" rx="5" ry="3"/><ellipse cx="284" cy="60" rx="3" ry="5"/><ellipse cx="270" cy="70" rx="3" ry="4"/><ellipse cx="290" cy="72" rx="2.5" ry="5"/><ellipse cx="276" cy="84" rx="3" ry="3.5"/><ellipse cx="287" cy="92" rx="2.5" ry="4"/><ellipse cx="270" cy="96" rx="2" ry="3"/><ellipse cx="279" cy="105" rx="4" ry="4"/></g><g filter="url(#grain)"><path d="M214 66 C220 76 224 88 225 97 C222 104 217 110 213.7 120 C210 130 207 140 205 152 L198 150 C198 130 200 110 204 92 C206 82 210 72 214 66 Z" fill="#9c9c9c"/><path d="M338 66 C336 78 334 88 333 95 C338 104 342 112 344 120 C346 130 348 140 349 152 L356 150 C356 130 354 110 350 92 C347 82 343 72 338 66 Z" fill="#8e8e8e"/></g><path d="M225 97 C222 104 217 110 213.7 120 C210 130 207 140 205 152" fill="none" stroke="#f6f6f6" stroke-width="6"/><path d="M333 95 C338 104 342 112 344 120 C346 130 348 140 349 152" fill="none" stroke="#f6f6f6" stroke-width="6"/><path d="M168.4 212 C170 214 172.8 218 172.4 220.5 C170.5 218 168.8 215 168.4 212 Z" fill="#f0f0f0" stroke="#f0f0f0" stroke-width="0.8"/><path d="M380 212 C381 220 377 227 371 231 C375 225 378 219 380 212 Z" fill="#f4f4f4" stroke="#f4f4f4" stroke-width="0.8"/>
<g stroke="#d0d0d0" stroke-width="1.5" fill="none"><line x1="514.5" y1="95" x2="514.5" y2="186.5"/><line x1="507" y1="95.5" x2="515" y2="95.5"/><line x1="507" y1="106.8" x2="515" y2="106.8"/><line x1="507" y1="118.2" x2="515" y2="118.2"/><line x1="507" y1="129.6" x2="515" y2="129.6"/><line x1="507" y1="140.9" x2="515" y2="140.9"/><line x1="507" y1="152.2" x2="515" y2="152.2"/><line x1="507" y1="163.6" x2="515" y2="163.6"/><line x1="507" y1="174.9" x2="515" y2="174.9"/><line x1="507" y1="186.3" x2="515" y2="186.3"/></g>
</svg>
<div class="tx" style="left:8px;top:7px;">20150618 10:12:24</div>
<div class="tx" style="left:8px;top:22px;transform:scaleX(0.906);transform-origin:0 0">CT GE MEDICAL SYSTEMS</div>
<div class="tx" style="left:8px;top:37px;">Exam: * * *</div>
<div class="tx" style="left:8px;top:52px;transform:scaleX(0.972);transform-origin:0 0">Slice Thickness: 2.500000 mm</div>
<div class="tx" style="left:8px;top:67px;">Image: 71 / 100</div>
<div class="tx" style="right:8px;top:7px;font-size:13px">天壇模拟医院</div>
<div class="tx" style="right:8px;top:22px;">***</div>
<div class="tx" style="right:8px;top:37px;">ID: * * *</div>
<div class="tx" style="right:8px;top:52px;letter-spacing:-0.4px">Sex: M&nbsp;</div>
<div class="tx" style="right:8px;top:67px;letter-spacing:-0.3px">Age: 036Y</div>
<div class="tx" style="left:479px;top:194px;font-size:13px;font-style:italic;color:#e8e8e8">80.0 mm</div>
<div class="tx" style="right:9px;top:245px">WW/WL: 100.00 / 40.00</div>
</div>
<div class="pn" style="left:1333px;top:787px;width:553px;height:282px">
<svg class="a" style="left:0;top:0" width="553" height="282" viewBox="0 0 553 282"><path d="M281 43 C342 43 364 90 364 154 C364 218 322 260 271 260 C222 260 183 218 183 162 C183 85 212 43 281 43 Z" fill="#0a0a0a" stroke="#a0a0a0" stroke-width="1.1"/><g filter="url(#grain)"><path d="M186 130 C184 160 186 195 196 222 L204 226 C198 200 196 170 198 140 C200 110 210 85 222 66 L214 64 C198 80 188 105 186 130 Z" fill="#6a6a6a"/><path d="M222 62 C214 80 210 100 206.5 114 C202 125 197 140 197 160 L187 160 C187 130 193 100 206 78 C210 70 215 66 222 62 Z" fill="#9e9e9e"/><path d="M331 60 C344 74 351 100 355 125 C359 140 362 155 361 168 L356 158 C356 140 350 128 346 112 C343 92 339 72 331 62 Z" fill="#8e8e8e"/></g><path d="M281 46 C308 46 324 52 332 58 C340 66 344 90 347 112 C350 128 357 140 357 154 C357 195 345 222 331.6 232 C318 246 298 256 272 256 C242 256 222 246 212 230 C202 214 197 190 197 160 C197 140 202 125 206.5 114 C210 100 214 80 221 63 C236 52 258 46 281 46 Z" fill="#f6f6f6"/><path d="M219 66 C226 56 240 49 260 46.5 L261 53 C250 54 240 57 230 62 C226 64 223 67 221 70 Z" fill="#262626"/><path d="M302 46.5 C318 47 326 52 332 58 L334 64 C326 58 316 54 302 53 Z" fill="#262626"/><g filter="url(#grain)"><path d="M204 150 C204 195 225 240 277.5 243 C325 243 349 200 349 150 C349 134 345 120 342 109 C338 100 332 96 326 96 C318 96 310 97 306 100 C300 106 296 114 294.4 120.6 L265.4 120.6 C264 114 262 110 259.6 106 C254 99 246 95 239 94.6 C232 95 224 96 219 97.5 C212 104 206 125 204 150 Z" fill="#7c7c7c"/><path d="M206 111 C216 130 226 155 226 172 C226 184 218 195 207 199 C205 168 205 138 206 111 Z" fill="#b8b8b8"/><g fill="#26263e" opacity="0.85"><path d="M268 133.7 L288.6 133.7 L286 146 L278 150 L270 146 Z"/><path d="M262 158 C266 170 282 176 292 164 L290 170 C282 182 266 178 262 158 Z"/><path d="M262 196 C266 206 272 212 276 213 C280 208 286 202 290 196 C285 201 280 204 276 203 C270 202 266 199 262 196 Z"/></g></g><rect x="268" y="128" width="20.6" height="5.7" rx="2" fill="#f4f4f4"/><path d="M229 52 C236 46 256 46 262 52 C263 70 262 88 259.6 97.5 C248 92 236 82 230 72 Z" fill="#050505"/><path d="M299 54 C306 48 328 48 333 56 C334 74 330 90 326 96 C314 98 304 96 300 97.5 Z" fill="#050505"/><g filter="url(#grain)"><circle cx="243.7" cy="64" r="12.5" fill="#50505e"/><circle cx="317.6" cy="65.6" r="12.5" fill="#50505e"/></g><circle cx="243.7" cy="64" r="12.5" fill="none" stroke="#b8b8b8" stroke-width="1.6"/><circle cx="317.6" cy="65.6" r="12.5" fill="none" stroke="#b8b8b8" stroke-width="1.6"/><path d="M310 55 C314 52 320 52 324 55" fill="none" stroke="#fff" stroke-width="2"/><g fill="#050505"><ellipse cx="272" cy="56" rx="5" ry="3"/><ellipse cx="284" cy="60" rx="3" ry="5"/><ellipse cx="270" cy="70" rx="3" ry="4"/><ellipse cx="290" cy="72" rx="2.5" ry="5"/><ellipse cx="276" cy="84" rx="3" ry="3.5"/><ellipse cx="287" cy="92" rx="2.5" ry="4"/><ellipse cx="270" cy="96" rx="2" ry="3"/><ellipse cx="279" cy="105" rx="4" ry="4"/></g><g filter="url(#grain)"><path d="M214 66 C220 76 224 88 225 97 C222 104 217 110 213.7 120 C210 130 207 140 205 152 L198 150 C198 130 200 110 204 92 C206 82 210 72 214 66 Z" fill="#9c9c9c"/><path d="M338 66 C336 78 334 88 333 95 C338 104 342 112 344 120 C346 130 348 140 349 152 L356 150 C356 130 354 110 350 92 C347 82 343 72 338 66 Z" fill="#8e8e8e"/></g><path d="M225 97 C222 104 217 110 213.7 120 C210 130 207 140 205 152" fill="none" stroke="#f6f6f6" stroke-width="6"/><path d="M333 95 C338 104 342 112 344 120 C346 130 348 140 349 152" fill="none" stroke="#f6f6f6" stroke-width="6"/><path d="M168.4 212 C170 214 172.8 218 172.4 220.5 C170.5 218 168.8 215 168.4 212 Z" fill="#f0f0f0" stroke="#f0f0f0" stroke-width="0.8"/><path d="M380 212 C381 220 377 227 371 231 C375 225 378 219 380 212 Z" fill="#f4f4f4" stroke="#f4f4f4" stroke-width="0.8"/>
<g stroke="#d0d0d0" stroke-width="1.5" fill="none"><line x1="514.5" y1="95" x2="514.5" y2="186.5"/><line x1="507" y1="95.5" x2="515" y2="95.5"/><line x1="507" y1="106.8" x2="515" y2="106.8"/><line x1="507" y1="118.2" x2="515" y2="118.2"/><line x1="507" y1="129.6" x2="515" y2="129.6"/><line x1="507" y1="140.9" x2="515" y2="140.9"/><line x1="507" y1="152.2" x2="515" y2="152.2"/><line x1="507" y1="163.6" x2="515" y2="163.6"/><line x1="507" y1="174.9" x2="515" y2="174.9"/><line x1="507" y1="186.3" x2="515" y2="186.3"/></g>
</svg>
<div class="tx" style="left:8px;top:7px;">20150618 10:12:24</div>
<div class="tx" style="left:8px;top:22px;transform:scaleX(0.906);transform-origin:0 0">CT GE MEDICAL SYSTEMS</div>
<div class="tx" style="left:8px;top:37px;">Exam: * * *</div>
<div class="tx" style="left:8px;top:52px;transform:scaleX(0.972);transform-origin:0 0">Slice Thickness: 2.500000 mm</div>
<div class="tx" style="left:8px;top:67px;">Image: 72 / 100</div>
<div class="tx" style="right:8px;top:7px;font-size:13px">天壇模拟医院</div>
<div class="tx" style="right:8px;top:22px;">***</div>
<div class="tx" style="right:8px;top:37px;">ID: * * *</div>
<div class="tx" style="right:8px;top:52px;letter-spacing:-0.4px">Sex: M&nbsp;</div>
<div class="tx" style="right:8px;top:67px;letter-spacing:-0.3px">Age: 036Y</div>
<div class="tx" style="left:479px;top:194px;font-size:13px;font-style:italic;color:#e8e8e8">80.0 mm</div>
<div class="tx" style="right:9px;top:245px">WW/WL: 100.00 / 40.00</div>
</div>
</body></html>
